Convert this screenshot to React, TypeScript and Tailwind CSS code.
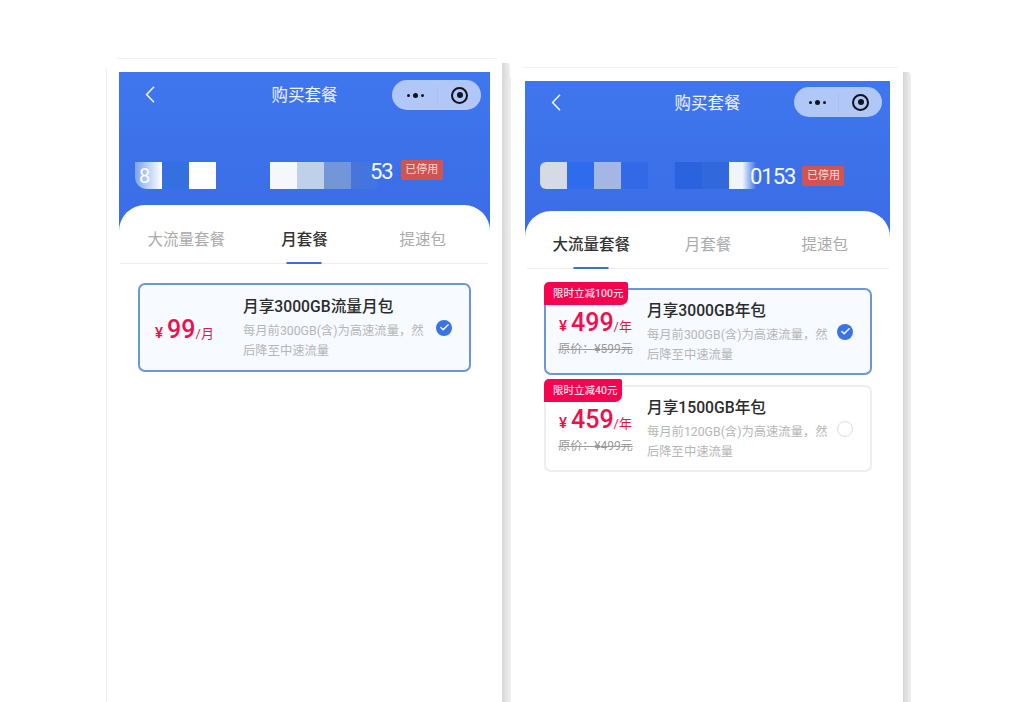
import { Check } from 'lucide-react'

const FONT = { fontFamily: 'Roboto, "Noto Sans CJK SC", sans-serif' }

function Capsule({ className }: { className: string }) {
  return (
    <div className={`flex h-[30px] shrink-0 items-center rounded-full bg-[#b1c7f8] ${className}`}>
      <div className="flex flex-1 items-center justify-center gap-[3px] pl-[2px]">
        <span className="h-[3px] w-[3px] rounded-full bg-[#10131c]" />
        <span className="h-[5px] w-[5px] rounded-full bg-[#10131c]" />
        <span className="h-[3px] w-[3px] rounded-full bg-[#10131c]" />
      </div>
      <div className="h-[18px] w-px bg-[#a9bff3]" />
      <div className="flex w-[43px] items-center justify-center">
        <span className="flex h-[17px] w-[17px] items-center justify-center rounded-full border-[2.5px] border-[#10131c]">
          <span className="h-[6px] w-[6px] rounded-full bg-[#10131c]" />
        </span>
      </div>
    </div>
  )
}

function BackIcon() {
  return (
    <svg width="10" height="17" viewBox="0 0 10 17" fill="none" className="shrink-0">
      <path d="M9 .8 1.6 8.5 9 16.2" stroke="#f3f6fe" strokeWidth="1.5" />
    </svg>
  )
}

function Badge({ className }: { className: string }) {
  return (
    <span className={`flex h-5 items-center justify-center rounded-[2px] bg-[#cf5452] text-[11px] text-[#f7dcdc] ${className}`}>
      已停用
    </span>
  )
}

function Tabs({ active, className }: { active: number; className: string }) {
  const tabs = ['大流量套餐', '月套餐', '提速包']
  return (
    <div className={`grid grid-cols-3 items-center border-b border-[#eeeeee] ${className}`}>
      {tabs.map((t, i) => (
        <div key={t} className="relative flex h-full items-center justify-center pt-[13px]">
          <span className={i === active ? 'text-[15.5px] font-medium text-[#333333]' : 'text-[15.5px] text-[#aaaaaa]'}>{t}</span>
          {i === active && <span className="absolute -bottom-px left-1/2 h-[2px] w-[35px] -translate-x-1/2 bg-[#3b6fd8]" />}
        </div>
      ))}
    </div>
  )
}

interface PlanProps {
  tag?: string
  price: string
  unit: string
  original?: string
  title: string
  desc: string
  selected: boolean
  className: string
}

function Plan({ tag, price, unit, original, title, desc, selected, className }: PlanProps) {
  return (
    <div
      className={`relative flex items-center rounded-[7px] border-2 ${
        selected ? 'border-[#6e95d6] bg-[#f7faff]' : 'border-[#ededed] bg-white'
      } ${className}`}
    >
      {tag && (
        <span className="absolute -left-[2px] -top-[8px] flex h-[23px] items-center rounded-tl-[5px] rounded-tr-[2px] rounded-br-[7px] bg-[#f5054f] pl-[9px] pr-[5px] text-[10.5px] font-medium text-[#ffdfe7]">
          {tag}
        </span>
      )}
      <div className={`flex shrink-0 flex-col items-center ${tag ? 'w-[99px] pt-[2px]' : 'w-[101px] pr-[12px] pt-[4px]'}`}>
        <div className="flex items-baseline text-[#ee0f4d]">
          <span className="mr-[4px] text-[15px] font-medium">¥</span>
          <span className="text-[25px] font-medium leading-[30px]">{price}</span>
          <span className="text-[13px]">/{unit}</span>
        </div>
        {original && (
          <span className="mt-[3px] whitespace-nowrap text-[12px] leading-4 text-[#9a9a9a] line-through">
            原价：¥{original}元
          </span>
        )}
      </div>
      <div className="min-w-0 flex-1 pl-[2px] pt-[2px]">
        <p className="whitespace-nowrap text-[15.7px] font-medium leading-[22px] text-[#2c2c2c]">{title}</p>
        <p className="mt-[3px] w-[186px] text-[12.3px] leading-5 text-[#b6b6b6]">{desc}</p>
      </div>
      <div className="flex w-[50px] shrink-0 justify-center">
        {selected ? (
          <span className="flex h-4 w-4 items-center justify-center rounded-full bg-[#3b73e6]">
            <Check className="h-[11px] w-[11px] text-white" strokeWidth={3} />
          </span>
        ) : (
          <span className="h-4 w-4 rounded-full border border-[#dddddd] bg-white" />
        )}
      </div>
    </div>
  )
}

function Shadow({ className }: { className: string }) {
  return <div className={`w-2 shrink-0 rounded-tr-[4px] bg-gradient-to-r from-[#d6d6d6] to-[#efefef] ${className}`} />
}

export default function App() {
  return (
    <div style={FONT} className="flex h-[702px] w-[1024px] overflow-hidden bg-white pl-[106px]">
      {/* Left phone */}
      <div className="mt-[58px] flex w-[396px] shrink-0 flex-col">
        <div className="ml-[11px] mr-[5px] h-px shrink-0 bg-[#f0f0f0]" />
        <div className="mt-[9px] flex flex-1 flex-col border-l border-[#f0f0f0] pl-[12px] pr-[12px] pt-[4px]">
          <div className="h-[161px] shrink-0 bg-gradient-to-b from-[#3f76ee] to-[#3a6ce6]">
            <div className="flex items-start pl-[26px] pr-[9px] pt-[8px]">
              <div className="pt-[6px]">
                <BackIcon />
              </div>
              <p className="mt-[4px] flex-1 pl-[62px] text-center text-[16.5px] text-[#eef2fd]">购买套餐</p>
              <Capsule className="w-[89px]" />
            </div>
            <div className="mt-[50px] flex items-start pl-4">
              <div className="mt-[2px] flex h-[27px] w-[243px] shrink-0">
                <span className="flex w-[27px] items-center rounded-bl-[12px] bg-gradient-to-r from-[#7fa3f2] to-white pl-[4px] text-[20px] leading-none text-white">
                  8
                </span>
                <span className="w-[27px] bg-[#3570e0]" />
                <span className="w-[27px] bg-white" />
                <span className="w-[54px]" />
                <span className="w-[27px] bg-[#f5f7fc]" />
                <span className="w-[27px] bg-[#bfd1ea]" />
                <span className="w-[27px] bg-[#7396d8]" />
                <span className="w-[27px] bg-gradient-to-r from-[#4a75d6] to-[#3f73e8]" />
              </div>
              <span className="ml-[-8px] mt-[1px] text-[22px] leading-none tracking-[-1px] text-[#f7f9ff]">53</span>
              <Badge className="ml-[8px] w-[42px]" />
            </div>
          </div>
          <div className="relative -mt-[28px] flex-1 rounded-t-[26px] bg-white">
            <Tabs active={1} className="ml-px mr-[2px] h-[59px] pl-[7px] pr-[6px]" />
            <Plan
              className="ml-[19px] mt-[19px] h-[89px] w-[333px]"
              price="99"
              unit="月"
              title="月享3000GB流量月包"
              desc="每月前300GB(含)为高速流量，然后降至中速流量"
              selected
            />
          </div>
        </div>
      </div>
      <Shadow className="mt-[63px]" />

      {/* Right phone */}
      <div className="mt-[67px] flex w-[393px] shrink-0 flex-col">
        <div className="ml-[13px] mr-[5px] h-px shrink-0 bg-[#f0f0f0]" />
        <div className="mt-[9px] flex flex-1 flex-col border-l border-[#f0f0f0] pl-[14px] pr-[13px] pt-[4px]">
          <div className="h-[158px] shrink-0 bg-gradient-to-b from-[#3f76ee] to-[#3a6ce6]">
            <div className="flex items-start pl-[26px] pr-[8px] pt-[6px]">
              <div className="pt-[7px]">
                <BackIcon />
              </div>
              <p className="mt-[5px] flex-1 pl-[60px] text-center text-[16.5px] text-[#eef2fd]">购买套餐</p>
              <Capsule className="w-[88px]" />
            </div>
            <div className="mt-[45px] flex items-start pl-[15px]">
              <div className="flex h-[27px] w-[216px] shrink-0">
                <span className="w-[27px] rounded-l-[6px] bg-[#d5dae4]" />
                <span className="w-[27px] bg-[#2f6bed]" />
                <span className="w-[27px] bg-[#a3b6e4]" />
                <span className="w-[27px] bg-[#3368e6]" />
                <span className="w-[27px]" />
                <span className="w-[27px] bg-[#2b62dd]" />
                <span className="w-[27px] bg-[#3169dc]" />
                <span className="w-[27px] bg-gradient-to-r from-[#f0f4fb] via-[#f0f4fb] to-[#3f73e8]" />
              </div>
              <span className="ml-[-6px] mt-[4px] text-[22px] leading-none tracking-[-1px] text-[#f7f9ff]">0153</span>
              <Badge className="ml-[7px] mt-[4px] w-[42px]" />
            </div>
          </div>
          <div className="relative -mt-[28px] flex-1 rounded-t-[26px] bg-white">
            <Tabs active={0} className="ml-[2px] mr-px h-[58px] pl-[6px] pr-[6px]" />
            <Plan
              className="ml-[19px] mt-[19px] h-[87px] w-[328px]"
              tag="限时立减100元"
              price="499"
              unit="年"
              original="599"
              title="月享3000GB年包"
              desc="每月前300GB(含)为高速流量，然后降至中速流量"
              selected
            />
            <Plan
              className="ml-[19px] mt-[10px] h-[87px] w-[328px]"
              tag="限时立减40元"
              price="459"
              unit="年"
              original="499"
              title="月享1500GB年包"
              desc="每月前120GB(含)为高速流量，然后降至中速流量"
              selected={false}
            />
          </div>
        </div>
      </div>
      <Shadow className="mt-[72px]" />
    </div>
  )
}
